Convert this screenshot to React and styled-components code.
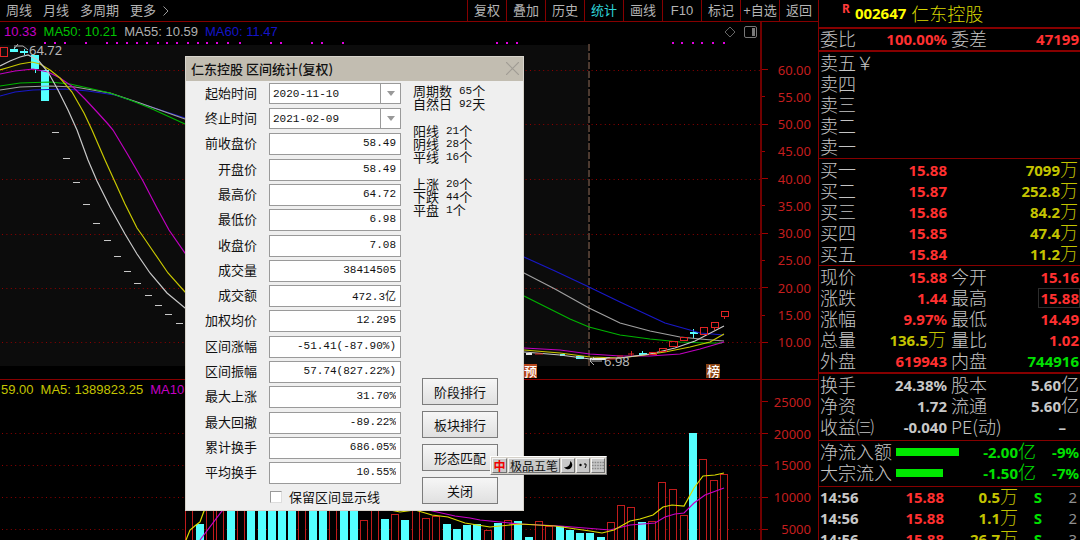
import React from "react";
import styled, { createGlobalStyle } from "styled-components";

const CJK = `"Noto Sans CJK SC", sans-serif`;
const LINE = "#860000";

const GlobalStyle = createGlobalStyle`
  *, *::before, *::after { box-sizing: border-box; }
  body { margin: 0; background: #000; color: #b4b4b4; font: 13px/20px "Liberation Sans", ${CJK}; }
  ul { margin: 0; padding: 0; list-style: none; }
  button, input, select { font: inherit; color: inherit; margin: 0; }
`;

const Page = styled.div`
  position: relative;
  display: grid;
  grid-template-columns: minmax(0, 1fr) 262px;
  height: 100vh;
  min-height: 540px;
  overflow: hidden;
`;

/* ---------- left side ---------- */
const Workspace = styled.main`
  display: flex;
  flex-direction: column;
  min-width: 0;
  min-height: 0;
`;
const Toolbar = styled.nav`
  display: flex;
  justify-content: space-between;
  height: 22px;
  border-bottom: 1px solid ${LINE};
`;
const Periods = styled.div`
  display: flex;
  gap: 11px;
  padding-left: 6px;
`;
const PeriodButton = styled.button`
  display: flex;
  align-items: center;
  gap: 7px;
  padding: 0;
  border: 0;
  background: none;
  font-size: 13px;
`;
const Tools = styled.div`
  display: flex;
`;
const ToolButton = styled.button`
  width: 39px;
  padding: 0;
  border: 0;
  border-left: 1px solid ${LINE};
  background: none;
  color: ${(p) => (p.$active ? "#2fd5da" : "#b4b4b4")};
  white-space: nowrap;
`;
const Charts = styled.div`
  flex: 1;
  min-height: 0;
  display: grid;
  grid-template-columns: minmax(0, 1fr) 56px;
  grid-template-rows: 358px minmax(0, 1fr);
`;
const Plot = styled.section`
  display: flex;
  flex-direction: column;
  min-width: 0;
  min-height: 0;
  overflow: hidden;
  border-right: 2px solid #700000;
  border-bottom: ${(p) => (p.$divided ? `1px solid ${LINE}` : "0")};
`;
const Legend = styled.div`
  display: flex;
  gap: 7px;
  height: 20px;
  padding-left: ${(p) => p.$inset}px;
  white-space: nowrap;
`;
const LegendItem = styled.span`
  color: ${(p) => p.$color};
`;
const PlotTools = styled.div`
  display: flex;
  align-items: center;
  gap: 8px;
  margin-left: auto;
  padding-right: 3px;
`;
const Drawing = styled.svg`
  display: block;
  width: 100%;
  height: ${(p) => p.$h}px;
  flex: none;
`;
const Axis = styled.aside`
  padding-top: ${(p) => p.$top}px;
  overflow: hidden;
  border-bottom: ${(p) => (p.$divided ? `1px solid ${LINE}` : "0")};
`;
const Scale = styled.ul`
  display: flex;
  flex-direction: column;
  height: ${(p) => p.$h}px;
  color: #c41e1e;
  font-family: "Noto Sans", sans-serif;
`;
const ScaleMark = styled.li`
  flex: 1;
  display: flex;
  align-items: center;
  justify-content: space-between;
  padding-right: 7px;
  &::before {
    content: "";
    width: ${(p) => (p.$minor ? 3 : 6)}px;
    height: 1px;
    background: #a00000;
  }
`;

/* ---------- quote panel ---------- */
const Quote = styled.aside`
  border-left: 1px solid ${LINE};
  overflow: hidden;
  font: 700 15px/21px "Noto Sans", ${CJK};
`;
const QuoteTitle = styled.h1`
  display: flex;
  align-items: center;
  gap: 5px;
  height: 27px;
  margin: 0;
  padding-left: 23px;
  color: #ffff00;
  font: inherit;
`;
const Flag = styled.sup`
  align-self: flex-start;
  color: #ff3b3b;
  font-size: 12px;
  line-height: 18px;
`;
const Name = styled.span`
  padding-bottom: 2px;
  font: 300 18px/24px ${CJK};
  color: #d8d800;
`;
const Block = styled.section`
  border-top: ${(p) => (p.$thick ? 2 : 1)}px solid ${LINE};
  padding: ${(p) => (p.$flush ? 0 : 1)}px 1px ${(p) => (p.$roomy ? 2 : 0)}px 1px;
`;
const Table = styled.table`
  width: 100%;
  table-layout: fixed;
  border-collapse: collapse;
`;
const Row = styled.tr`
  height: ${(p) => p.$h || 21}px;
`;
const Head = styled.th`
  padding: 0 0 3px ${(p) => p.$inset || 0}px;
  text-align: left;
  font: 300 18px/18px ${CJK};
  color: #c4c4c4;
  white-space: nowrap;
`;
const tones = {
  red: "#ff3030",
  yellow: "#c4c400",
  green: "#00e000",
  white: "#c8c8c8",
  dim: "#909090",
};
const Cell = styled.td`
  padding: 0 ${(p) => p.$inset || 0}px 2px 0;
  line-height: 18px;
  text-align: ${(p) => p.$align || "right"};
  color: ${(p) => tones[p.$tone]};
  font-weight: ${(p) => (p.$tone === "dim" ? 400 : 700)};
  white-space: nowrap;
`;
const Unit = styled.span`
  font: 300 18px/16px ${CJK};
`;
const Framed = styled.span`
  display: inline-block;
  padding-left: 1px;
  line-height: 18px;
  outline: 1px solid #2c2c2c;
`;
const Bar = styled.div`
  height: 8px;
  background: #00e800;
`;

/* ---------- statistics dialog ---------- */
const Dialog = styled.form`
  position: absolute;
  left: 185px;
  top: 56px;
  width: 339px;
  background: #efefef;
  border: 1px solid #d8d4cc;
  color: #111;
  font: 13px/20px ${CJK};
`;
const TitleBar = styled.header`
  display: flex;
  align-items: center;
  justify-content: space-between;
  height: 24px;
  padding: 0 4px 1px 5px;
  background: #c2bdb1;
  font-weight: 500;
`;
const CloseButton = styled.button`
  display: flex;
  padding: 0;
  border: 0;
  background: none;
`;
const Body = styled.div`
  display: grid;
  grid-template-columns: 216px 1fr;
`;
const Fields = styled.div`
  display: grid;
  grid-template-rows: repeat(16, 1fr);
  height: 405px;
`;
const Field = styled.label`
  display: grid;
  grid-template-columns: 71px 132px;
  column-gap: 12px;
  align-items: center;
  text-align: right;
`;
const FieldName = styled.span`
  padding-bottom: 2px;
`;
const boxed = `
  width: 100%;
  height: 22px;
  border: 1px solid #9a9a9a;
  border-radius: 0;
  background: #fff;
  font: 11px/18px "Liberation Mono", "Noto Sans CJK SC", monospace;
  outline: none;
`;
const ValueBox = styled.input`
  ${boxed}
  padding: 0 4px 2px;
  text-align: right;
`;
const SelectWrap = styled.span`
  display: flex;
  position: relative;
`;
const DateSelect = styled.select`
  ${boxed}
  height: 21px;
  padding: 0 3px;
  appearance: none;
`;
const DropArrow = styled.span`
  position: absolute;
  top: 1px;
  right: 1px;
  bottom: 1px;
  width: 20px;
  display: flex;
  align-items: center;
  justify-content: center;
  border-left: 1px solid #9a9a9a;
  pointer-events: none;
`;
const KeepLine = styled.label`
  display: flex;
  align-items: center;
  gap: 7px;
  height: 24px;
  padding: 0 0 2px 84px;
`;
const Tick = styled.input`
  appearance: none;
  width: 12px;
  height: 12px;
  border: 1px solid #9a9a9a;
  border-right-color: #ddd;
  border-bottom-color: #ddd;
  background: #fff;
`;
const Side = styled.div`
  display: flex;
  flex-direction: column;
  justify-content: space-between;
  padding: 3px 0 6px 11px;
`;
const Counts = styled.div`
  display: flex;
  flex-direction: column;
  gap: 14px;
  line-height: 13px;
`;
const CountLine = styled.div`
  display: flex;
  align-items: center;
  height: 13px;
`;
const Count = styled.span`
  padding: 2px 0 0 7px;
  font: 11px/13px "Liberation Mono", monospace;
`;
const Actions = styled.div`
  display: flex;
  flex-direction: column;
  gap: 6px;
  padding-left: 9px;
`;
const Action = styled.button`
  width: 76px;
  height: 27px;
  padding: 0;
  border: 1px solid #7c7c7c;
  background: linear-gradient(#f6f6f6, #e0e0e0);
`;

/* ---------- input method bar ---------- */
const ImeBar = styled.div`
  position: absolute;
  left: 490px;
  top: 456px;
  display: flex;
  gap: 1px;
  height: 19px;
  padding: 1px;
  background: #d4d0c8;
  border: 1px solid;
  border-color: #fff #808080 #808080 #fff;
  color: #111;
`;
const ImeKey = styled.button`
  display: flex;
  align-items: center;
  justify-content: center;
  width: ${(p) => p.$w}px;
  padding: 0;
  border: 1px solid;
  border-color: #f4f4f4 #707070 #707070 #f4f4f4;
  background: #c8c8c8;
  color: ${(p) => p.$color || "#111"};
  font: ${(p) => (p.$color ? 700 : 400)} 12px/13px ${CJK};
  white-space: nowrap;
`;

/* ---------- data ---------- */
const tools = ["复权", "叠加", "历史", "统计", "画线", "F10", "标记", "+自选", "返回"];
const prices = ["60.00", "55.00", "50.00", "45.00", "40.00", "35.00", "30.00", "25.00", "20.00", "15.00", "10.00"];
const volumes = ["25000", "20000", "15000", "10000", "5000"];

const priceLines = [
  ["#1818c8", "0,96 15,92 33,90 65,89 88,91 115,95 145,105 185,118 524,257 555,271 589,287 620,302 650,316 665,323 690,330 700,333 724,335"],
  ["#a0a0a0", "0,90 20,87 50,86 75,87 110,93 140,103 185,119 524,273 555,289 589,308 620,323 650,331 680,337 700,339 724,341"],
  ["#00b400", "0,86 20,83 50,82 70,84 88,88 110,93 130,100 150,108 185,124 524,296 550,309 570,319 589,327 620,335 650,339 680,342 705,343 722,343"],
  ["#c000c0", "0,74 15,71 33,69 48,72 60,78 73,87 85,99 98,113 108,124 113,130 128,155 143,181 157,208 169,230 185,253 260,320 400,346 524,348 560,350 590,354 620,356 650,356 680,354 700,349 724,342"],
  ["#c8c800", "0,70 10,67 20,64 32,62 40,64 50,70 60,78 72,92 84,113 92,130 105,160 115,182 125,204 137,228 142,235 155,254 168,273 185,292 260,340 400,349 524,350 560,353 590,357 620,358 645,355 665,352 690,347 710,342 724,334"],
  ["#c8c8c8", "0,66 10,61 20,57 28,55 38,60 48,72 58,90 68,110 77,130 88,160 97,181 110,207 125,234 137,254 150,273 167,293 185,308 260,346 400,351 524,352 560,355 590,359 620,358 650,354 675,348 695,341 724,326"],
];
const dots = [45, 55, 65, 86, 107, 117, 127, 137, 147, 158, 167, 177, 188, 198, 207, 217, 228, 240, 271, 281, 312, 322, 343, 497, 507, 517, 673, 682, 693, 702, 713, 724];
const dashes = [[55, 132], [66, 158], [76, 182], [86, 204], [96, 223], [107, 240], [117, 256], [127, 271], [137, 283], [148, 295], [158, 305], [168, 314], [179, 323]];
const hollow = [[0, 47, 7, 9], [649, 352, 7, 2], [659, 348, 7, 3], [669, 341, 8, 5], [680, 337, 7, 3], [700, 327, 7, 7], [711, 322, 7, 5], [721, 311, 7, 5]];
const solid = [[10, 49, 8, 3], [20, 51, 8, 2], [31, 55, 8, 14], [41, 70, 8, 31], [576, 356, 8, 3], [560, 354, 5, 2], [639, 353, 8, 2], [690, 332, 8, 2]];

// [left, top, rising]
const volumeBars = [
  [185, 500, 1], [196, 524, 0], [206, 500, 1], [216, 495, 1], [227, 490, 0], [237, 500, 1], [247, 490, 0], [258, 490, 0], [268, 490, 0], [278, 490, 0],
  [288, 490, 0], [298, 500, 1], [309, 490, 0], [319, 490, 0], [329, 500, 1], [340, 490, 0], [350, 500, 0], [360, 520, 1], [371, 500, 1], [381, 519, 0],
  [391, 514, 1], [401, 520, 0], [412, 508, 1], [422, 518, 1], [432, 516, 1], [443, 524, 0], [453, 529, 0], [463, 525, 0], [473, 524, 0], [484, 530, 1],
  [494, 523, 0], [504, 520, 1], [514, 521, 0], [525, 537, 0], [535, 521, 1], [545, 526, 1], [556, 526, 0], [566, 530, 0], [576, 533, 0], [586, 533, 0],
  [597, 537, 0], [607, 522, 1], [617, 505, 1], [627, 507, 1], [638, 522, 0], [648, 521, 1], [658, 482, 1], [669, 489, 1], [680, 515, 1], [689, 433, 0],
  [699, 459, 1], [710, 480, 1], [720, 474, 1],
];

const bids = [
  ["买一", "15.88", "7099"], ["买二", "15.87", "252.8"], ["买三", "15.86", "84.2"], ["买四", "15.85", "47.4"], ["买五", "15.84", "11.2"],
];
const stats = [
  ["现价", "15.88", "", "red", "今开", "15.16", "", "red"],
  ["涨跌", "1.44", "", "red", "最高", "15.88", "", "red", true],
  ["涨幅", "9.97%", "", "red", "最低", "14.49", "", "red"],
  ["总量", "136.5", "万", "yellow", "量比", "1.02", "", "red"],
  ["外盘", "619943", "", "red", "内盘", "744916", "", "green"],
];
const basics = [
  ["换手", "24.38%", "", "white", "股本", "5.60", "亿", "white"],
  ["净资", "1.72", "", "white", "流通", "5.60", "亿", "white"],
  ["收益㈢", "-0.040", "", "white", "PE(动)", "–", "", "white"],
];
const flows = [["净流入额", 63, "-2.00", "-9%"], ["大宗流入", 47, "-1.50", "-7%"]];
const trades = [["0.5", "2"], ["1.1", "2"], ["26.7", "3"]];

const fields = [
  ["前收盘价", "58.49"], ["开盘价", "58.49"], ["最高价", "64.72"], ["最低价", "6.98"], ["收盘价", "7.08"], ["成交量", "38414505"], ["成交额", "472.3亿"],
  ["加权均价", "12.295"], ["区间涨幅", "-51.41(-87.90%)"], ["区间振幅", "57.74(827.22%)"], ["最大上涨", "31.70%"], ["最大回撤", "-89.22%"],
  ["累计换手", "686.05%"], ["平均换手", "10.55%"],
];
const counts = [
  [["周期数", 65, "个"], ["自然日", 92, "天"]],
  [["阳线", 21, "个"], ["阴线", 28, "个"], ["平线", 16, "个"]],
  [["上涨", 20, "个"], ["下跌", 44, "个"], ["平盘", 1, "个"]],
];

const GridLines = ({ ys }) =>
  ys.map((y) => <line key={y} x1="2" x2="760" y1={y + 0.5} y2={y + 0.5} stroke="#900000" strokeDasharray="1 3.4" />);

function PriceChart() {
  return (
    <Drawing $h={337} viewBox="0 42 760 337" preserveAspectRatio="xMinYMin slice">
      <rect x="0" y="45" width="589" height="321" fill="#0c0c0c" />
      <GridLines ys={[70, 124, 179, 234, 288, 342]} />
      {dots.map((x) => <rect key={x} x={x - 1} y="42" width="2" height="2" fill="#e000e0" />)}
      <line x1="589" x2="589" y1="44" y2="366" stroke="#4c3a30" strokeDasharray="7 2" strokeWidth="2" />
      {solid.map(([x, y, w, h]) => <rect key={x} x={x} y={y} width={w} height={h} fill="#54ffff" />)}
      <path d="M14.5 47v5M24.5 49v6M35.5 69v4M642.5 351v3M693.5 329v9" stroke="#54ffff" fill="none" />
      {dashes.map(([x, y]) => <rect key={x} x={x - 3} y={y} width="7" height="1" fill="#c8c8c8" />)}
      <g fill="none" strokeWidth="1.2">
        {priceLines.map(([c, pts]) => <polyline key={c} points={pts} stroke={c} />)}
      </g>
      <path d="M526 354h6M590 359h16" stroke="#e8e8e8" strokeWidth="2" />
      <path d="M535 354h8M607 359h9M617 356h6M628 354h6M631.5 351v5" stroke="#d02020" />
      {hollow.map(([x, y, w, h]) => <rect key={x} x={x + 0.5} y={y + 0.5} width={w} height={h} fill="none" stroke="#e02424" />)}
      <path d="M714.5 327v3M724.5 316v3" stroke="#e02424" />
      <path d="M18 44l-4 5M14 46h9l5 4M594 357l-4 4 4 4M590 361h12" fill="none" stroke="#b0b0b0" />
      <g fontFamily="Noto Sans" fontSize="13" fill="#b8b8b8">
        <text x="29" y="55">64.72</text>
        <text x="604" y="366">6.98</text>
      </g>
      <rect x="523" y="364" width="14" height="14" fill="#b8481c" />
      <rect x="706" y="364" width="14" height="14" fill="#8a4414" />
      <g fontFamily="Noto Sans CJK SC" fontSize="13" fontWeight="500" fill="#fff">
        <text x="524" y="376">预</text>
        <text x="707" y="376">榜</text>
      </g>
    </Drawing>
  );
}

function VolumeChart() {
  return (
    <Drawing $h={140} viewBox="0 400 760 140" preserveAspectRatio="xMinYMin slice">
      <GridLines ys={[433, 465, 497, 529]} />
      {volumeBars.map(([x, y, up]) =>
        up ? (
          <rect key={x} x={x + 0.5} y={y + 0.5} width="7" height={550 - y} fill="#000" stroke="#c01c1c" />
        ) : (
          <rect key={x} x={x} y={y} width="8" height={550 - y} fill="#54ffff" />
        )
      )}
      <g fill="none" strokeWidth="1.2">
        <path stroke="#c800c8" d="M200 540L222 511L300 480L428 510L455 516L470 518L480 520L520 524L560 526L610 530L630 525L655 523L665 517L675 514L684 513L694 503L705 495L724 488" />
        <path stroke="#dcdc00" d="M186 540L190 530L196 525L200 522L204 511L290 480L390 510L400 512L415 510L432 515L448 517L465 523L490 527L520 524L555 526L590 531L602 533L614 530L630 521L640 519L653 515L663 507L672 505L684 506L694 488L703 476L715 475L724 473" />
      </g>
    </Drawing>
  );
}

function PairTable({ rows }) {
  return (
    <Table>
      <colgroup><col width="60" /><col width="67" /><col width="60" /><col /></colgroup>
      <tbody>
        {rows.map(([l1, v1, u1, t1, l2, v2, u2, t2, framed]) => (
          <Row key={l1}>
            <Head scope="row">{l1}</Head>
            <Cell $tone={t1} $inset={u1 ? 1 : 0}>{v1}{u1 && <Unit>{u1}</Unit>}</Cell>
            <Head scope="row" $inset={4}>{l2}</Head>
            <Cell $tone={t2} $inset={v2 === "–" ? 13 : 0}>{framed ? <Framed>{v2}</Framed> : v2}{u2 && <Unit>{u2}</Unit>}</Cell>
          </Row>
        ))}
      </tbody>
    </Table>
  );
}

function QuotePanel() {
  return (
    <Quote>
      <QuoteTitle><Flag>R</Flag>002647 <Name>仁东控股</Name></QuoteTitle>
      <Block $thick $flush>
        <PairTable rows={[["委比", "100.00%", "", "red", "委差", "47199", "", "red"]]} />
      </Block>
      <Block $thick>
        <Table>
          <tbody>
            {["卖五￥", "卖四", "卖三", "卖二", "卖一"].map((n) => (
              <Row key={n}><Head scope="row">{n}</Head></Row>
            ))}
          </tbody>
        </Table>
      </Block>
      <Block>
        <Table>
          <colgroup><col width="60" /><col width="67" /><col /></colgroup>
          <tbody>
            {bids.map(([n, p, v]) => (
              <Row key={n}>
                <Head scope="row">{n}</Head>
                <Cell $tone="red">{p}</Cell>
                <Cell $tone="yellow" $inset={1}>{v}<Unit>万</Unit></Cell>
              </Row>
            ))}
          </tbody>
        </Table>
      </Block>
      <Block><PairTable rows={stats} /></Block>
      <Block $thick $roomy><PairTable rows={basics} /></Block>
      <Block $roomy>
        <Table>
          <colgroup><col width="76" /><col width="64" /><col /><col width="43" /></colgroup>
          <tbody>
            {flows.map(([n, w, v, pct]) => (
              <Row key={n}>
                <Head scope="row">{n}</Head>
                <Cell><Bar style={{ width: w }} /></Cell>
                <Cell $tone="green">{v}<Unit>亿</Unit></Cell>
                <Cell $tone="green">{pct}</Cell>
              </Row>
            ))}
          </tbody>
        </Table>
      </Block>
      <Block $flush>
        <Table>
          <colgroup><col width="50" /><col width="74" /><col width="74" /><col width="26" /><col /></colgroup>
          <tbody>
            {trades.map(([v, c]) => (
              <Row key={v} $h={20}>
                <Cell $tone="white" $align="left">14:56</Cell>
                <Cell $tone="red">15.88</Cell>
                <Cell $tone="yellow">{v}<Unit>万</Unit></Cell>
                <Cell $tone="green" $inset={2}>S</Cell>
                <Cell $tone="dim" $inset={2}>{c}</Cell>
              </Row>
            ))}
          </tbody>
        </Table>
      </Block>
    </Quote>
  );
}

function DateField({ label, value }) {
  return (
    <Field>
      <FieldName>{label}</FieldName>
      <SelectWrap>
        <DateSelect defaultValue={value}><option>{value}</option></DateSelect>
        <DropArrow>
          <svg width="8" height="5" viewBox="0 0 8 5"><path d="M0 0h8L4 5z" fill="#999" /></svg>
        </DropArrow>
      </SelectWrap>
    </Field>
  );
}

function StatsDialog() {
  return (
    <Dialog role="dialog" aria-label="区间统计" onSubmit={(e) => e.preventDefault()}>
      <TitleBar>
        仁东控股 区间统计(复权)
        <CloseButton type="button" aria-label="关闭窗口">
          <svg width="13" height="13" viewBox="0 0 13 13"><path d="M0 0L13 13M13 0L0 13" stroke="#a09c94" strokeWidth="1.2" /></svg>
        </CloseButton>
      </TitleBar>
      <Body>
        <div>
          <Fields>
            <DateField label="起始时间" value="2020-11-10" />
            <DateField label="终止时间" value="2021-02-09" />
            {fields.map(([l, v]) => (
              <Field key={l}><FieldName>{l}</FieldName><ValueBox readOnly value={v} /></Field>
            ))}
          </Fields>
          <KeepLine><Tick type="checkbox" />保留区间显示线</KeepLine>
        </div>
        <Side>
          <Counts>
            {counts.map((group) => (
              <div key={group[0][0]}>
                {group.map(([l, n, u]) => (
                  <CountLine key={l}>{l}<Count>{n}</Count>{u}</CountLine>
                ))}
              </div>
            ))}
          </Counts>
          <Actions>
            {["阶段排行", "板块排行", "形态匹配", "关闭"].map((t) => <Action key={t} type="button">{t}</Action>)}
          </Actions>
        </Side>
      </Body>
    </Dialog>
  );
}

export default function App() {
  return (
    <Page>
      <GlobalStyle />
      <Workspace>
        <Toolbar>
          <Periods>
            <PeriodButton>周线</PeriodButton>
            <PeriodButton>月线</PeriodButton>
            <PeriodButton>多周期</PeriodButton>
            <PeriodButton>
              更多
              <svg width="6" height="10" viewBox="0 0 6 10"><path d="M0.5 0.5L5 5L0.5 9.5" fill="none" stroke="#999" /></svg>
            </PeriodButton>
          </Periods>
          <Tools>
            {tools.map((t) => <ToolButton key={t} $active={t === "统计"}>{t}</ToolButton>)}
          </Tools>
        </Toolbar>
        <Charts>
          <Plot $divided>
            <Legend $inset={4}>
              <LegendItem $color="#c400c4">10.33</LegendItem>
              <LegendItem $color="#00c400">MA50: 10.21</LegendItem>
              <LegendItem $color="#b0b0b0">MA55: 10.59</LegendItem>
              <LegendItem $color="#1414c8">MA60: 11.47</LegendItem>
              <PlotTools>
                <svg width="12" height="12" viewBox="0 0 12 12"><path d="M6 1l5 5-5 5-5-5z" fill="none" stroke="#666" /></svg>
                <svg width="13" height="12" viewBox="0 0 13 12">
                  <rect x="0.5" y="0.5" width="12" height="11" rx="1.5" fill="none" stroke="#777" />
                  <rect x="8" y="2" width="3" height="8" fill="#777" />
                </svg>
              </PlotTools>
            </Legend>
            <PriceChart />
          </Plot>
          <Axis $top={34} $divided>
            <Scale $h={300}>
              {prices.map((p, i) => <ScaleMark key={p} $minor={i % 2 === 1}>{p}</ScaleMark>)}
            </Scale>
          </Axis>
          <Plot>
            <Legend $inset={1}>
              <LegendItem $color="#c4c400">59.00</LegendItem>
              <LegendItem $color="#c4c400">MA5: 1389823.25</LegendItem>
              <LegendItem $color="#c400c4">MA10</LegendItem>
            </Legend>
            <VolumeChart />
          </Plot>
          <Axis $top={6}>
            <Scale $h={159}>
              {volumes.map((v) => <ScaleMark key={v}>{v}</ScaleMark>)}
            </Scale>
          </Axis>
        </Charts>
      </Workspace>
      <QuotePanel />
      <StatsDialog />
      <ImeBar>
        <ImeKey $w={15} $color="#f00000">中</ImeKey>
        <ImeKey $w={52}>极品五笔</ImeKey>
        <ImeKey $w={14} aria-label="半角">
          <svg width="9" height="9" viewBox="0 0 9 9"><path d="M6 0A4.4 4.4 0 1 1 0 6A5 5 0 0 0 6 0z" fill="#000" /></svg>
        </ImeKey>
        <ImeKey $w={14} aria-label="标点">
          <svg width="8" height="6" viewBox="0 0 8 6"><circle cx="1.5" cy="2" r="1.2" /><path d="M5 1h2v2l-1 2" fill="none" stroke="#000" /></svg>
        </ImeKey>
        <ImeKey $w={14} aria-label="软键盘">
          <svg width="12" height="9" viewBox="0 0 12 9"><path d="M0 1.5h12M0 4.5h12M0 7.5h12" stroke="#888" strokeWidth="1.6" strokeDasharray="1.6 1" /></svg>
        </ImeKey>
      </ImeBar>
    </Page>
  );
}
